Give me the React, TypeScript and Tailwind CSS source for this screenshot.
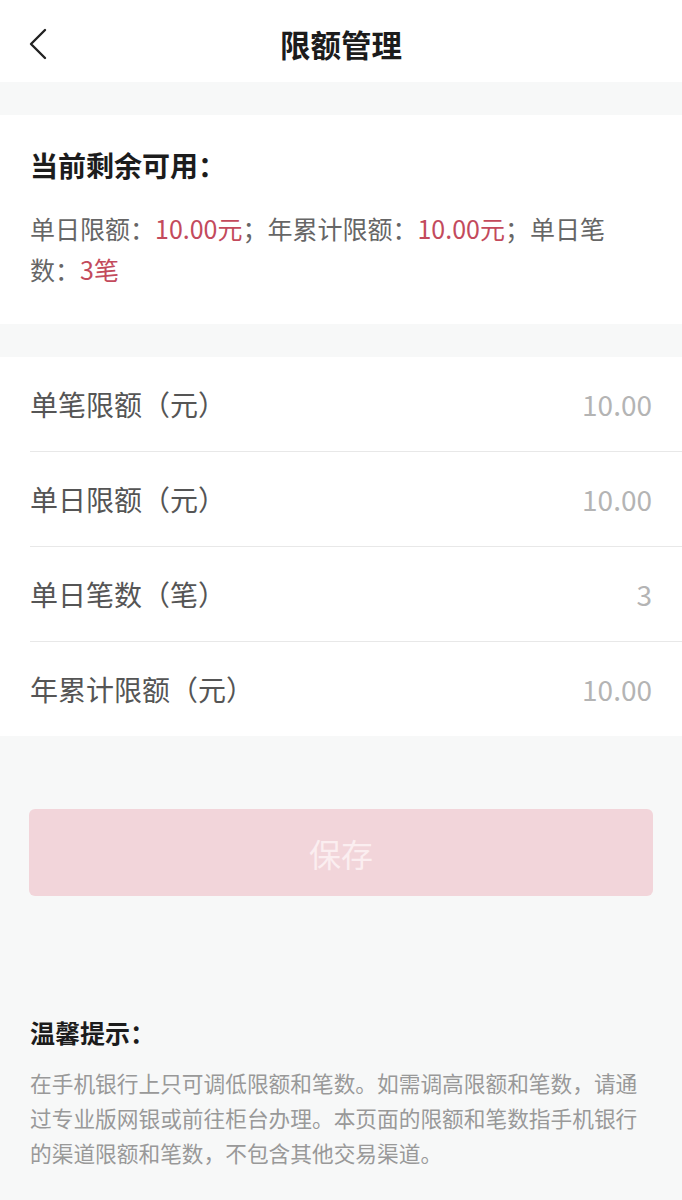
const rows = [
  { label: "单笔限额（元）", value: "10.00" },
  { label: "单日限额（元）", value: "10.00" },
  { label: "单日笔数（笔）", value: "3" },
  { label: "年累计限额（元）", value: "10.00" },
];

export default function App() {
  return (
    <div className="min-h-[1200px] w-[682px] bg-[#f7f8f8] font-['Noto_Sans_CJK_SC','Noto_Sans',sans-serif]">
      {/* header */}
      <div className="relative flex h-[82px] items-center justify-center bg-white pt-[6px]">
        <button className="absolute left-[28px] top-[28px]">
          <svg width="20" height="32" viewBox="0 0 20 32" fill="none">
            <path d="M17 2 L3 16 L17 30" stroke="#222" strokeWidth="2.4" strokeLinecap="round" strokeLinejoin="round" />
          </svg>
        </button>
        <h1 className="text-[30.5px] leading-[40px] font-bold text-[#1c1c1c]">限额管理</h1>
      </div>

      {/* remaining */}
      <div className="mt-[33px] bg-white px-[30px] pt-[30px] pb-[34px]">
        <h2 className="text-[28px] leading-[40px] font-bold text-[#1c1c1c]">当前剩余可用：</h2>
        <p className="mt-[23px] text-[25px] leading-[41px] text-[#666]">
          单日限额：<span className="text-[#c34a5c]">10.00元</span>；年累计限额：
          <span className="text-[#c34a5c]">10.00元</span>；单日笔
          <br />
          数：<span className="text-[#c34a5c]">3笔</span>
        </p>
      </div>

      {/* form rows */}
      <div className="mt-[33px] bg-white pl-[30px]">
        {rows.map((r, i) => (
          <div
            key={r.label}
            className={`flex h-[94px] items-center justify-between pr-[30px] ${i < rows.length - 1 ? "border-b border-[#e8e8e8] box-content" : ""}`}
          >
            <span className="text-[28px] text-[#555]">{r.label}</span>
            <span className="text-[28px] text-[#b4b4b4]">{r.value}</span>
          </div>
        ))}
      </div>

      {/* save */}
      <div className="px-[29px] pt-[73px]">
        <button className="flex h-[87px] w-full items-center justify-center rounded-[6px] bg-[#f2d5da] text-[32px] text-[#fbeef0]">
          保存
        </button>
      </div>

      {/* tips */}
      <div className="px-[30px] pt-[119px] pb-[40px]">
        <h3 className="text-[25px] leading-[34px] font-bold text-[#1c1c1c]">温馨提示：</h3>
        <p className="mt-[16px] text-[21.7px] leading-[35px] text-[#999]">
          在手机银行上只可调低限额和笔数。如需调高限额和笔数，请通过专业版网银或前往柜台办理。本页面的限额和笔数指手机银行的渠道限额和笔数，不包含其他交易渠道。
        </p>
      </div>
    </div>
  );
}
